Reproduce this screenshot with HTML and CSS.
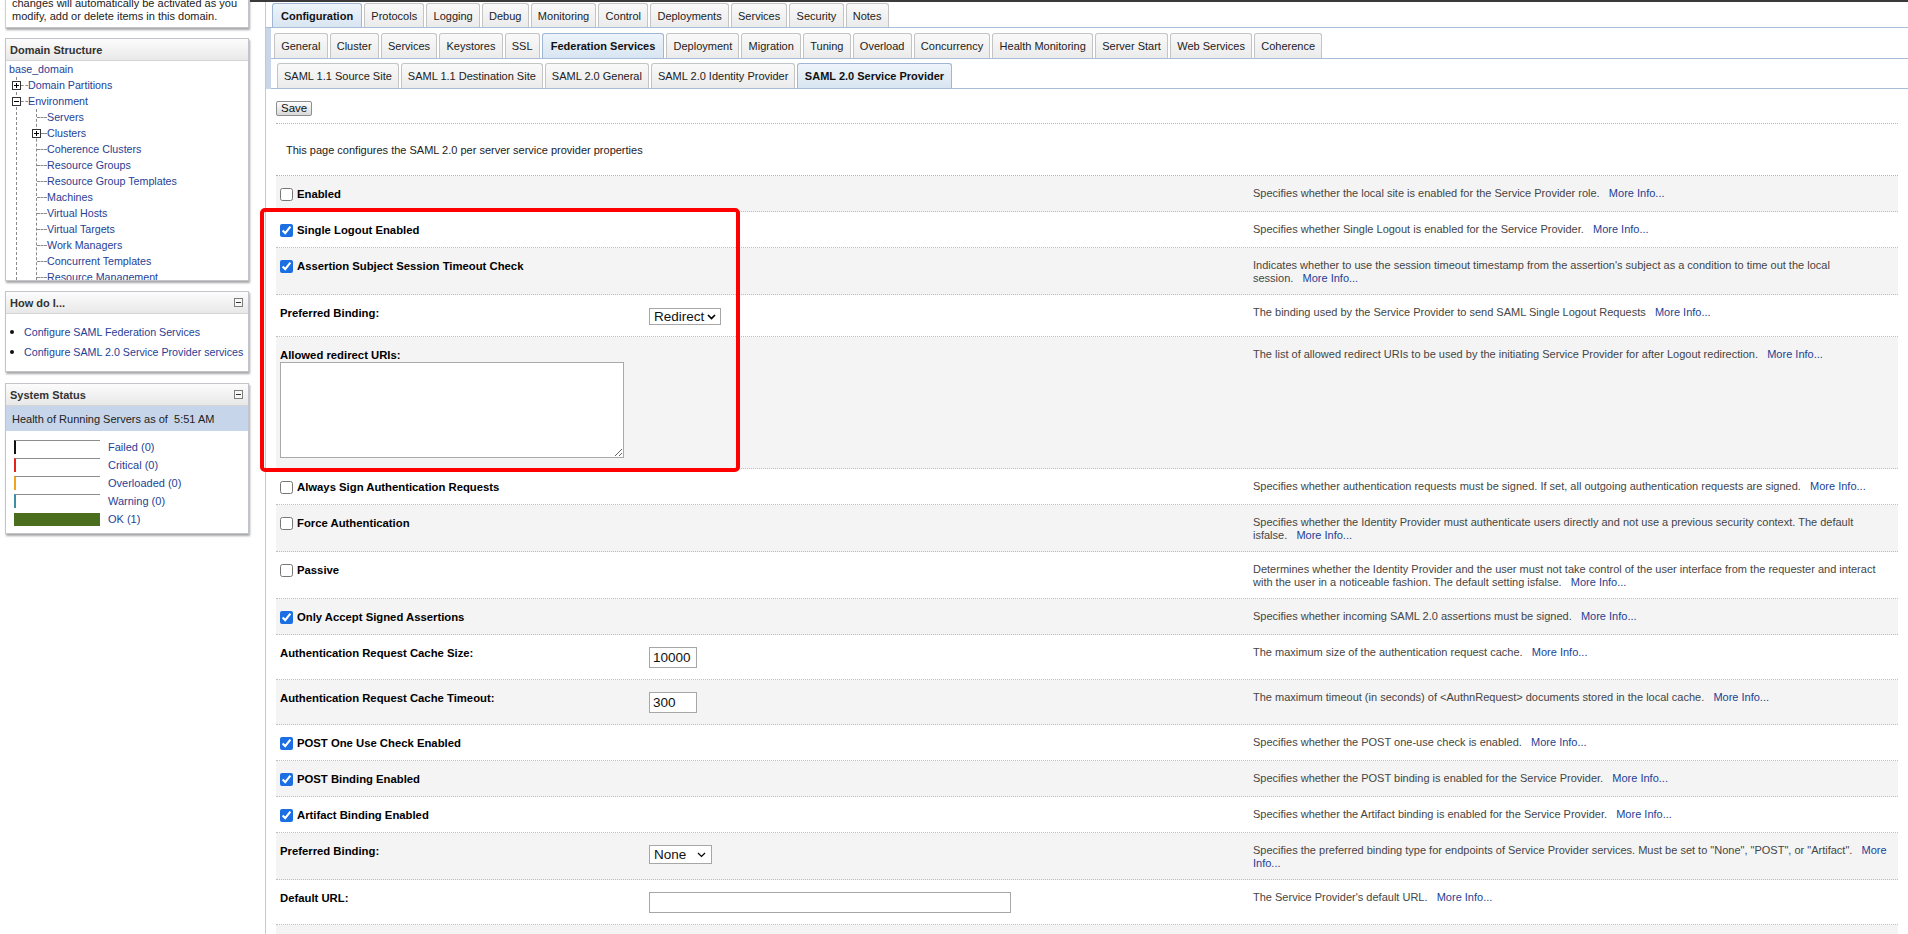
FILE: index.html
```html
<!DOCTYPE html>
<html lang="en">
<head>
<meta charset="utf-8">
<title>SAML 2.0 Service Provider</title>
<link rel="stylesheet" href="styles.css">
</head>
<body>
<div class="page">
  <aside class="sidebar">
    <div class="panel change">
      <p>changes will automatically be activated as you<br>modify, add or delete items in this domain.</p>
    </div>

    <div class="panel domain">
      <div class="phead">Domain Structure</div>
      <div class="tree">
        <div class="tnode root"><a href="#">base_domain</a></div>
        <div class="tkids l1">
          <div class="tnode"><svg class="tbox" width="9" height="9" viewBox="0 0 9 9"><rect x=".5" y=".5" width="8" height="8" fill="#fff" stroke="#333"/><path d="M2 4.5h5M4.5 2v5" stroke="#000"/></svg><span class="tdash"></span><a href="#">Domain Partitions</a></div>
          <div class="tnode"><svg class="tbox" width="9" height="9" viewBox="0 0 9 9"><rect x=".5" y=".5" width="8" height="8" fill="#fff" stroke="#333"/><path d="M2 4.5h5" stroke="#000"/></svg><span class="tdash"></span><a href="#">Environment</a></div>
          <div class="tkids l2">
            <div class="tnode"><span class="tdash long"></span><a href="#">Servers</a></div>
            <div class="tnode"><svg class="tbox" width="9" height="9" viewBox="0 0 9 9"><rect x=".5" y=".5" width="8" height="8" fill="#fff" stroke="#333"/><path d="M2 4.5h5M4.5 2v5" stroke="#000"/></svg><span class="tdash short"></span><a href="#">Clusters</a></div>
            <div class="tnode"><span class="tdash long"></span><a href="#">Coherence Clusters</a></div>
            <div class="tnode"><span class="tdash long"></span><a href="#">Resource Groups</a></div>
            <div class="tnode"><span class="tdash long"></span><a href="#">Resource Group Templates</a></div>
            <div class="tnode"><span class="tdash long"></span><a href="#">Machines</a></div>
            <div class="tnode"><span class="tdash long"></span><a href="#">Virtual Hosts</a></div>
            <div class="tnode"><span class="tdash long"></span><a href="#">Virtual Targets</a></div>
            <div class="tnode"><span class="tdash long"></span><a href="#">Work Managers</a></div>
            <div class="tnode"><span class="tdash long"></span><a href="#">Concurrent Templates</a></div>
            <div class="tnode"><span class="tdash long"></span><a href="#">Resource Management</a></div>
          </div>
        </div>
      </div>
    </div>

    <div class="panel howdo">
      <div class="phead"><span>How do I...</span><svg width="9" height="9" viewBox="0 0 9 9"><rect x=".5" y=".5" width="8" height="8" fill="#f7f7f7" stroke="#7d7d7d"/><path d="M2 4.5h5" stroke="#333"/></svg></div>
      <ul class="howlist">
        <li><a href="#">Configure SAML Federation Services</a></li>
        <li><a href="#">Configure SAML 2.0 Service Provider services</a></li>
      </ul>
    </div>

    <div class="panel status">
      <div class="phead"><span>System Status</span><svg width="9" height="9" viewBox="0 0 9 9"><rect x=".5" y=".5" width="8" height="8" fill="#f7f7f7" stroke="#7d7d7d"/><path d="M2 4.5h5" stroke="#333"/></svg></div>
      <div class="band">Health of Running Servers as of&nbsp; 5:51 AM</div>
      <div class="bars">
        <div class="srow"><span class="bar failed"></span><a href="#">Failed (0)</a></div>
        <div class="srow"><span class="bar crit"></span><a href="#">Critical (0)</a></div>
        <div class="srow"><span class="bar over"></span><a href="#">Overloaded (0)</a></div>
        <div class="srow"><span class="bar warn"></span><a href="#">Warning (0)</a></div>
        <div class="srow"><span class="bar ok"></span><a href="#">OK (1)</a></div>
      </div>
    </div>
  </aside>

  <main class="main">
    <div class="inner">
      <nav class="tabs t1">
        <span class="tab sel">Configuration</span>
        <span class="tab">Protocols</span>
        <span class="tab">Logging</span>
        <span class="tab">Debug</span>
        <span class="tab">Monitoring</span>
        <span class="tab">Control</span>
        <span class="tab">Deployments</span>
        <span class="tab">Services</span>
        <span class="tab">Security</span>
        <span class="tab">Notes</span>
      </nav>
      <div class="sub">
        <nav class="tabs t2">
          <span class="tab">General</span>
          <span class="tab">Cluster</span>
          <span class="tab">Services</span>
          <span class="tab">Keystores</span>
          <span class="tab">SSL</span>
          <span class="tab sel">Federation Services</span>
          <span class="tab">Deployment</span>
          <span class="tab">Migration</span>
          <span class="tab">Tuning</span>
          <span class="tab">Overload</span>
          <span class="tab">Concurrency</span>
          <span class="tab">Health Monitoring</span>
          <span class="tab">Server Start</span>
          <span class="tab">Web Services</span>
          <span class="tab">Coherence</span>
        </nav>
        <nav class="tabs t3">
          <span class="tab">SAML 1.1 Source Site</span>
          <span class="tab">SAML 1.1 Destination Site</span>
          <span class="tab">SAML 2.0 General</span>
          <span class="tab">SAML 2.0 Identity Provider</span>
          <span class="tab sel">SAML 2.0 Service Provider</span>
        </nav>
      </div>

      <div class="content">
        <div class="toolbar"><button class="save" type="button">Save</button></div>
        <p class="intro">This page configures the SAML 2.0 per server service provider properties</p>

        <div class="form">
          <div class="row">
            <div class="lab"><label><input type="checkbox">Enabled</label></div>
            <div class="ctl"></div>
            <div class="desc">Specifies whether the local site is enabled for the Service Provider&nbsp;role.&nbsp;&nbsp;&nbsp;<a class="more" href="#">More Info...</a></div>
          </div>
          <div class="row">
            <div class="lab"><label><input type="checkbox" checked>Single Logout Enabled</label></div>
            <div class="ctl"></div>
            <div class="desc">Specifies whether Single Logout is enabled for the Service Provider.&nbsp;&nbsp;&nbsp;<a class="more" href="#">More Info...</a></div>
          </div>
          <div class="row">
            <div class="lab"><label><input type="checkbox" checked>Assertion Subject Session Timeout Check</label></div>
            <div class="ctl"></div>
            <div class="desc">Indicates whether to use the session timeout timestamp from the assertion's subject as a condition to time out the local session.&nbsp;&nbsp;&nbsp;<a class="more" href="#">More Info...</a></div>
          </div>
          <div class="row">
            <div class="lab"><span class="plain">Preferred Binding:</span></div>
            <div class="ctl"><span class="selbox redirect">Redirect<svg width="9" height="6" viewBox="0 0 9 6"><path d="M1 1l3.5 3.5L8 1" fill="none" stroke="#000" stroke-width="1.7"/></svg></span></div>
            <div class="desc">The binding used by the Service Provider to send SAML Single Logout Requests&nbsp;&nbsp;&nbsp;<a class="more" href="#">More Info...</a></div>
          </div>
          <div class="row">
            <div class="lab"><span class="plain">Allowed redirect URIs:</span><textarea class="uris"></textarea></div>
            <div class="ctl"></div>
            <div class="desc">The list of allowed redirect URIs to be used by the initiating Service Provider for after Logout redirection.&nbsp;&nbsp;&nbsp;<a class="more" href="#">More Info...</a></div>
          </div>
          <div class="row">
            <div class="lab"><label><input type="checkbox">Always Sign Authentication Requests</label></div>
            <div class="ctl"></div>
            <div class="desc">Specifies whether authentication requests must be signed. If set, all outgoing authentication requests are signed.&nbsp;&nbsp;&nbsp;<a class="more" href="#">More Info...</a></div>
          </div>
          <div class="row">
            <div class="lab"><label><input type="checkbox">Force Authentication</label></div>
            <div class="ctl"></div>
            <div class="desc">Specifies whether the Identity Provider must authenticate users directly and not use a previous security context. The default isfalse.&nbsp;&nbsp;&nbsp;<a class="more" href="#">More Info...</a></div>
          </div>
          <div class="row">
            <div class="lab"><label><input type="checkbox">Passive</label></div>
            <div class="ctl"></div>
            <div class="desc">Determines whether the Identity Provider and the user must not take control of the user interface from the requester and interact with the user in a noticeable fashion. The default setting isfalse.&nbsp;&nbsp;&nbsp;<a class="more" href="#">More Info...</a></div>
          </div>
          <div class="row">
            <div class="lab"><label><input type="checkbox" checked>Only Accept Signed Assertions</label></div>
            <div class="ctl"></div>
            <div class="desc">Specifies whether incoming SAML 2.0 assertions must be signed.&nbsp;&nbsp;&nbsp;<a class="more" href="#">More Info...</a></div>
          </div>
          <div class="row">
            <div class="lab"><span class="plain">Authentication Request Cache Size:</span></div>
            <div class="ctl"><input class="txt short" type="text" value="10000"></div>
            <div class="desc">The maximum size of the authentication request cache.&nbsp;&nbsp;&nbsp;<a class="more" href="#">More Info...</a></div>
          </div>
          <div class="row">
            <div class="lab"><span class="plain">Authentication Request Cache Timeout:</span></div>
            <div class="ctl"><input class="txt short" type="text" value="300"></div>
            <div class="desc">The maximum timeout (in seconds) of &lt;AuthnRequest&gt; documents stored in the local cache.&nbsp;&nbsp;&nbsp;<a class="more" href="#">More Info...</a></div>
          </div>
          <div class="row">
            <div class="lab"><label><input type="checkbox" checked>POST One Use Check Enabled</label></div>
            <div class="ctl"></div>
            <div class="desc">Specifies whether the POST one-use check is enabled.&nbsp;&nbsp;&nbsp;<a class="more" href="#">More Info...</a></div>
          </div>
          <div class="row">
            <div class="lab"><label><input type="checkbox" checked>POST Binding Enabled</label></div>
            <div class="ctl"></div>
            <div class="desc">Specifies whether the POST binding is enabled for the Service Provider.&nbsp;&nbsp;&nbsp;<a class="more" href="#">More Info...</a></div>
          </div>
          <div class="row">
            <div class="lab"><label><input type="checkbox" checked>Artifact Binding Enabled</label></div>
            <div class="ctl"></div>
            <div class="desc">Specifies whether the Artifact binding is enabled for the Service Provider.&nbsp;&nbsp;&nbsp;<a class="more" href="#">More Info...</a></div>
          </div>
          <div class="row">
            <div class="lab"><span class="plain">Preferred Binding:</span></div>
            <div class="ctl"><span class="selbox none">None<svg width="9" height="6" viewBox="0 0 9 6"><path d="M1 1l3.5 3.5L8 1" fill="none" stroke="#000" stroke-width="1.2"/></svg></span></div>
            <div class="desc">Specifies the preferred binding type for endpoints of Service Provider services. Must be set to "None", "POST", or "Artifact".&nbsp;&nbsp;&nbsp;<a class="more" href="#">More Info...</a></div>
          </div>
          <div class="row">
            <div class="lab"><span class="plain">Default URL:</span></div>
            <div class="ctl"><input class="txt wide" type="text" value=""></div>
            <div class="desc">The Service Provider's default URL.&nbsp;&nbsp;&nbsp;<a class="more" href="#">More Info...</a></div>
          </div>
          <div class="row empty">
            <div class="lab"></div>
            <div class="ctl"></div>
            <div class="desc"></div>
          </div>
        </div>
      </div>
    </div>
  </main>

  <div class="highlight"></div>
</div>
</body>
</html>
```

FILE: styles.css
```css
html, body {
  margin: 0;
  padding: 0;
  height: 934px;
  overflow: hidden;
  background: #fff;
  font-family: "Liberation Sans", Arial, sans-serif;
  color: #222;
}

a {
  color: #1f4196;
  text-decoration: none;
}

.page {
  display: flex;
  position: relative;
}

/* ---------- sidebar ---------- */
.sidebar {
  width: 250px;
  flex: none;
  padding-left: 5px;
  box-sizing: border-box;
}

.panel {
  width: 244px;
  box-sizing: border-box;
  border: 1px solid #c2c5c9;
  background: #fff;
  box-shadow: 1px 2px 2px rgba(0, 0, 0, 0.35);
  margin-bottom: 10px;
}

.change {
  margin-top: -7px;
  padding: 3px 7px 4px 6px;
  border-left-color: #c9d3e0;
}

.change p {
  margin: 0;
  font-size: 11px;
  line-height: 13px;
  color: #222;
}

.phead {
  height: 22px;
  box-sizing: border-box;
  display: flex;
  align-items: center;
  justify-content: space-between;
  padding: 0 5px 0 4px;
  font-size: 11px;
  font-weight: bold;
  color: #333;
  background: linear-gradient(#fcfcfc, #e8e8e8);
  border-bottom: 1px solid #d4d4d4;
}

.phead svg {
  display: block;
}

.tree {
  height: 219px;
  overflow: hidden;
  font-size: 10.7px;
}

.tnode {
  display: flex;
  align-items: center;
  height: 16px;
  white-space: nowrap;
}

.tnode.root {
  padding-left: 3px;
}

.tkids {
  border-left: 1px dashed #8a8a8a;
}

.l1 {
  margin-left: 10px;
}

.l2 {
  margin-left: 19px;
}

.tbox {
  display: block;
  flex: none;
  margin-left: -5px;
}

.tdash {
  display: inline-block;
  flex: none;
  width: 7px;
  height: 0;
  border-top: 1px dashed #8a8a8a;
}

.tdash.long {
  width: 10px;
}

.tdash.short {
  width: 6px;
}

.howlist {
  list-style: none;
  margin: 0;
  padding: 8px 0 9px 0;
  font-size: 10.7px;
}

.howlist li {
  display: flex;
  align-items: center;
  height: 20px;
  white-space: nowrap;
}

.howlist li::before {
  content: "";
  width: 4px;
  height: 4px;
  border-radius: 50%;
  background: #111;
  margin: 0 10px 0 4px;
  flex: none;
}

.status {
  margin-top: 11px;
}

.band {
  height: 25px;
  display: flex;
  align-items: center;
  padding-left: 6px;
  background: #c7d5ea;
  font-size: 11px;
  color: #222;
}

.bars {
  padding: 7px 0 5px 0;
}

.srow {
  display: flex;
  align-items: center;
  height: 18px;
  font-size: 11px;
}

.bar {
  width: 86px;
  height: 14px;
  box-sizing: border-box;
  border-top: 1px solid #8d8d8d;
  border-left: 2px solid #111;
  margin: 0 8px 0 8px;
  flex: none;
}

.bar.crit { border-left-color: #e2231a; }
.bar.over { border-left-color: #f2a31b; }
.bar.warn { border-left-color: #3d8da8; }
.bar.ok {
  height: 13px;
  border: 0;
  background: #4b6d1e;
}

/* ---------- main ---------- */
.main {
  flex: 1;
  min-width: 0;
  border-top: 2px solid #3a3a3a;
}

.inner {
  margin-left: 15px;
  border-left: 1px solid #c4c9cf;
  min-height: 932px;
}

.tabs {
  display: flex;
  align-items: flex-end;
  gap: 2px;
  border-bottom: 1px solid #a8bdd7;
}

.t1 {
  padding: 1px 0 0 6px;
}

.sub {
  border-left: 5px solid #c8d6e7;
}

.t2 {
  padding: 5px 0 0 3px;
}

.t3 {
  padding: 4px 0 0 6px;
}

.tab {
  height: 24px;
  box-sizing: border-box;
  display: flex;
  align-items: center;
  padding: 0 6px;
  border: 1px solid #c4c4c4;
  border-bottom: 0;
  border-radius: 3px 3px 0 0;
  background: linear-gradient(#f9f9f9, #ebebeb);
  font-size: 11px;
  color: #222;
  white-space: nowrap;
}

.t1 .tab {
  padding: 0 6.2px;
}

.t2 .tab,
.t3 .tab {
  height: 25px;
}

.t2 .tab {
  padding: 0 6.2px;
}

.t3 .tab {
  padding: 0 6px;
}

.tab.sel,
.t3 .tab.sel {
  background: linear-gradient(#eef4fa, #d8e5f2);
  border-color: #9fb7d3;
  font-weight: bold;
  color: #111;
}

.t1 .tab.sel,
.t2 .tab.sel {
  padding: 0 8px;
}

.t3 .tab.sel {
  padding: 0 6.5px;
}

.content {
  padding: 0 10px;
}

.toolbar {
  padding: 12px 0 7px;
  border-bottom: 1px dotted #b3b3b3;
}

.save {
  display: block;
  height: 15px;
  box-sizing: border-box;
  margin: 0;
  padding: 0 4px;
  border: 1px solid #8e8e8e;
  border-radius: 2px;
  background: linear-gradient(#fdfdfd, #d9d9d9);
  font-family: "Liberation Sans", Arial, sans-serif;
  font-size: 11.5px;
  line-height: 13px;
  color: #111;
}

.intro {
  margin: 0;
  padding: 19px 10px 18px;
  font-size: 11px;
  line-height: 14px;
  color: #222;
  border-bottom: 1px dotted #b3b3b3;
}

.row {
  display: grid;
  grid-template-columns: 373px 604px 1fr;
  border-bottom: 1px dotted #bdbdbd;
}

.row:nth-child(odd) {
  background: #f4f4f4;
}

.row.empty {
  min-height: 36px;
}

.lab {
  padding: 11px 0 10px 4px;
  font-size: 11.3px;
  font-weight: bold;
  line-height: 14px;
  color: #000;
}

.lab label {
  display: flex;
  align-items: center;
  height: 14px;
  white-space: nowrap;
}

.lab .plain {
  display: block;
  height: 14px;
}

.lab input[type="checkbox"] {
  width: 13px;
  height: 13px;
  margin: 0 4px 0 0;
  accent-color: #1b6fe2;
  flex: none;
}

.uris {
  display: block;
  width: 344px;
  height: 96px;
  box-sizing: border-box;
  margin: 0;
  border: 1px solid #a9a9a9;
  background: #fff;
  font-family: "Liberation Sans", Arial, sans-serif;
}

.ctl {
  padding: 12px 0 11px;
}

.txt {
  display: block;
  height: 21px;
  box-sizing: border-box;
  margin: 0;
  padding: 0 3px;
  border: 1px solid #a7a7a7;
  border-radius: 0;
  background: #fff;
  font-family: "Liberation Sans", Arial, sans-serif;
  font-size: 13.5px;
  color: #111;
}

.txt.short { width: 48px; }
.txt.wide { width: 362px; }

.selbox {
  display: inline-flex;
  align-items: center;
  justify-content: space-between;
  box-sizing: border-box;
  border: 1px solid #a7a7a7;
  background: #fff;
  font-size: 13.5px;
  color: #111;
}

.selbox.redirect {
  width: 72px;
  height: 17px;
  margin-top: 1px;
  padding: 0 4px 0 4px;
}

.selbox.none {
  width: 63px;
  height: 19px;
  padding: 0 5px 0 4px;
}

.desc {
  padding: 11px 5px 9px 0;
  font-size: 11px;
  line-height: 13px;
  color: #454545;
}

.more {
  color: #1c3f96;
}

/* annotation overlay */
.highlight {
  position: absolute;
  left: 260px;
  top: 208px;
  width: 480px;
  height: 264px;
  box-sizing: border-box;
  border: 4px solid #ff0000;
  border-radius: 5px;
  pointer-events: none;
}
```
